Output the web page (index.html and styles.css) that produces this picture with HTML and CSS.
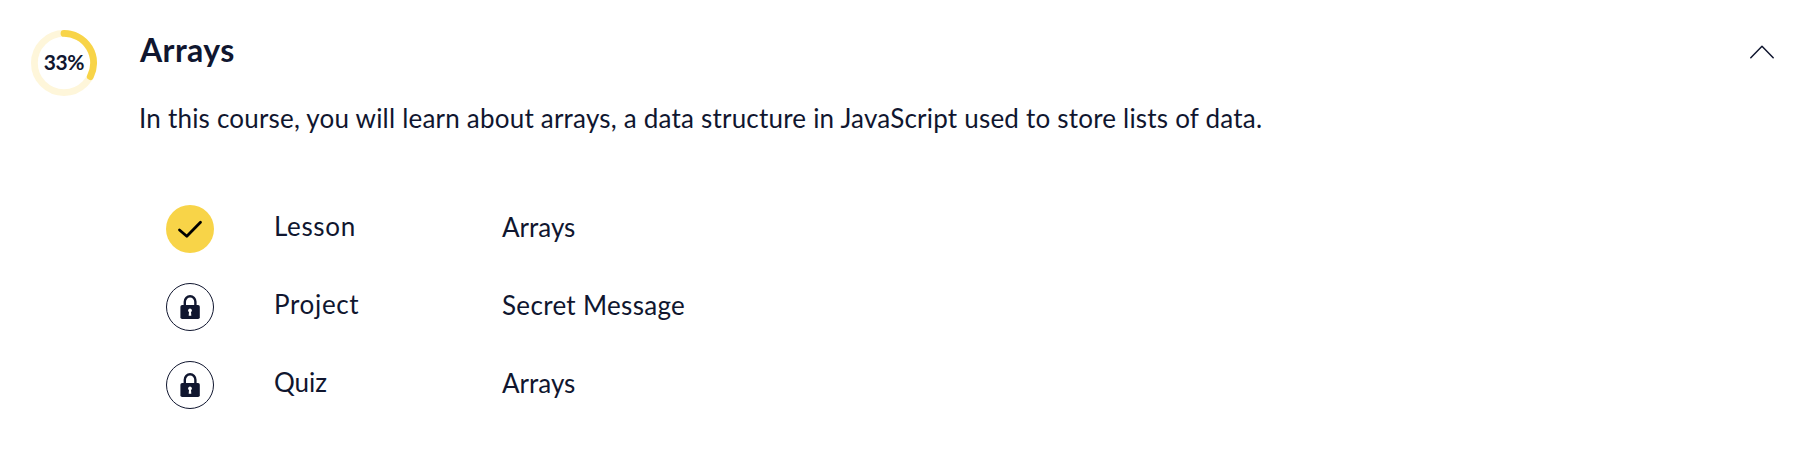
FILE: index.html
```html
<!DOCTYPE html>
<html lang="en">
<head>
<meta charset="utf-8">
<title>Arrays</title>
<link rel="stylesheet" href="styles.css">
</head>
<body>
<section class="module">
  <div class="progress">
    <svg class="progress-ring" viewBox="0 0 66 66" fill="none" stroke-width="6.8">
      <circle cx="33" cy="33" r="29.6" stroke="#fef6da"/>
      <path d="M33 3.4A29.6 29.6 0 0 1 59.3 46.6" stroke="#f8d448" stroke-linecap="round"/>
    </svg>
    <span class="progress-value">33%</span>
  </div>
  <div class="content">
    <h2 class="title">Arrays</h2>
    <p class="description">In this course, you will learn about arrays, a data structure in JavaScript used to store lists of data.</p>
    <ul class="items">
      <li class="item">
        <svg class="status" viewBox="0 0 48 48" fill="none">
          <circle cx="24" cy="24" r="24" fill="#f8d448"/>
          <path d="M13.5 25L20.8 31.2L34.5 17.2" stroke="#000" stroke-width="2.8" stroke-linecap="round" stroke-linejoin="round"/>
        </svg>
        <span class="kind">Lesson</span>
        <span class="name">Arrays</span>
      </li>
      <li class="item">
        <svg class="status" viewBox="0 0 48 48" fill="none">
          <circle cx="24" cy="24" r="23.5" stroke="#10162f"/>
          <path d="M18.8 23V18.8a5.3 5.5 0 0 1 10.6 0V23" stroke="#10162f" stroke-width="2.4"/>
          <rect x="14.4" y="22" width="19.4" height="14" rx="1.8" fill="#10162f"/>
          <path d="M24 25.4a2 2 0 0 1 1 3.7L25.3 32.8h-2.6L23 29.1a2 2 0 0 1 1-3.7Z" fill="#fff"/>
        </svg>
        <span class="kind">Project</span>
        <span class="name name-long">Secret Message</span>
      </li>
      <li class="item">
        <svg class="status" viewBox="0 0 48 48" fill="none">
          <circle cx="24" cy="24" r="23.5" stroke="#10162f"/>
          <path d="M18.8 23V18.8a5.3 5.5 0 0 1 10.6 0V23" stroke="#10162f" stroke-width="2.4"/>
          <rect x="14.4" y="22" width="19.4" height="14" rx="1.8" fill="#10162f"/>
          <path d="M24 25.4a2 2 0 0 1 1 3.7L25.3 32.8h-2.6L23 29.1a2 2 0 0 1 1-3.7Z" fill="#fff"/>
        </svg>
        <span class="kind kind-short">Quiz</span>
        <span class="name">Arrays</span>
      </li>
    </ul>
  </div>
  <svg class="chevron" viewBox="0 0 26 16" fill="none" stroke="#10162f" stroke-width="1.5" stroke-linecap="round" stroke-linejoin="round">
    <path d="M1.8 13.7L13 2.3L24.2 13.7"/>
  </svg>
</section>
</body>
</html>
```
FILE: styles.css
```css
* { box-sizing: border-box; }
body {
  margin: 0;
  background: #fff;
  color: #10162f;
  font-family: Lato, "Liberation Sans", sans-serif;
  font-size: 26px;
  line-height: 40px;
}
.module {
  display: flex;
  align-items: flex-start;
  min-height: 453px;
  padding: 30px 28px 0 31px;
}
.progress {
  display: grid;
  flex: none;
  place-items: center;
  width: 66px;
  height: 66px;
  margin-right: 43px;
}
.progress-ring,
.progress-value { grid-area: 1 / 1; }
.progress-ring { width: 66px; height: 66px; }
.progress-value {
  padding-bottom: 3px;
  font-size: 21px;
  font-weight: 700;
  line-height: 24px;
  letter-spacing: -0.4px;
}
.content { flex: 1; }
.title {
  margin: 0 0 28px;
  font-size: 32px;
  font-weight: 700;
  line-height: 40px;
  letter-spacing: 0.4px;
}
.description { margin: 0 0 0 -1px; letter-spacing: 0.21px; }
.items {
  display: flex;
  flex-direction: column;
  gap: 30px;
  margin: 67px 0 0;
  padding: 0 0 0 26px;
  list-style: none;
}
.item {
  display: grid;
  grid-template-columns: 108px 228px 1fr;
  align-items: center;
  height: 48px;
}
.status { display: block; width: 48px; height: 48px; }
.kind { padding-bottom: 6px; letter-spacing: 0.65px; }
.kind-short { letter-spacing: 0; }
.name { padding-bottom: 4px; }
.name-long { letter-spacing: 0.32px; }
.chevron { flex: none; width: 26px; height: 16px; margin-top: 14px; }
```
